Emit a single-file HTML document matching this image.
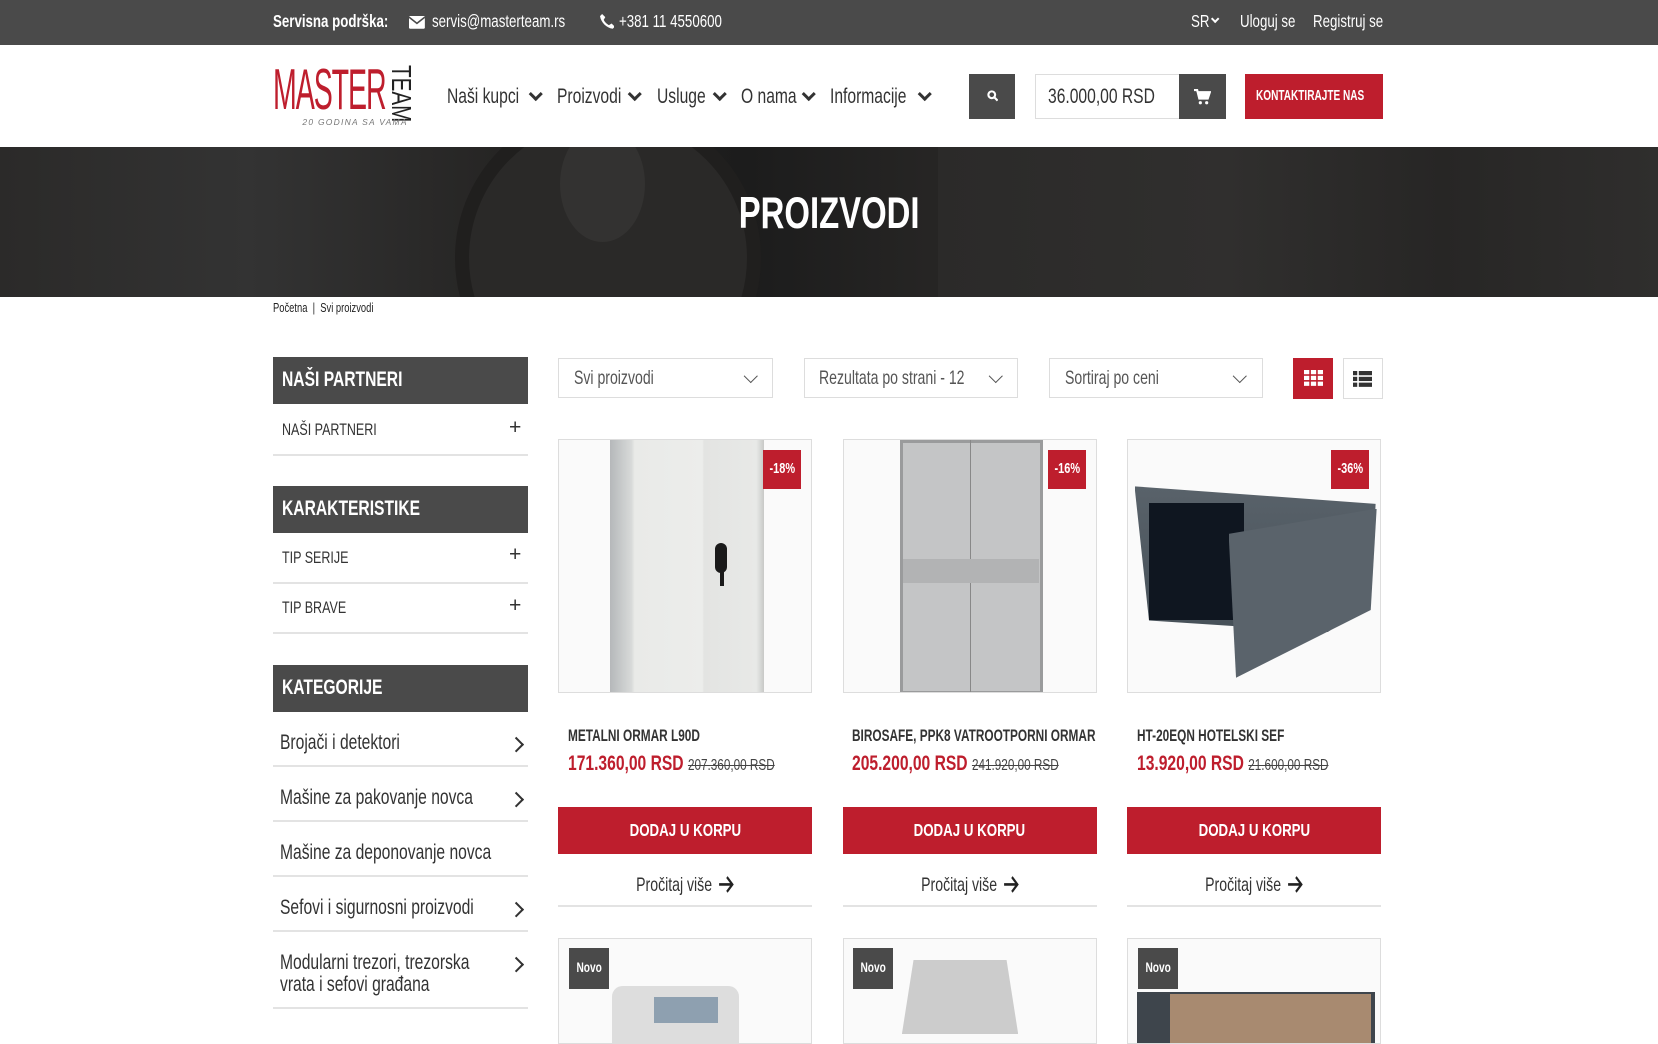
<!DOCTYPE html>
<html><head><meta charset="utf-8">
<style>
html{zoom:1.05740}
*{margin:0;padding:0;box-sizing:border-box}
body{width:1568px;height:973px;overflow:hidden;background:#fff;font-family:"Liberation Sans",sans-serif;color:#333;position:relative}
.a{position:absolute;white-space:nowrap}
.n{display:inline-block;transform:scaleX(.74);transform-origin:0 50%;white-space:nowrap}
.nc{display:inline-block;transform:scaleX(.74);transform-origin:50% 50%;white-space:nowrap}
.top{position:absolute;left:0;top:0;width:1568px;height:43px;background:#4a4a4a;color:#fff;font-size:17px;overflow:hidden}
.top .a{top:10px}
.nav{font-size:20px;top:80px;color:#333}
.chev{display:inline-block;width:9px;height:9px;border-right:3px solid #333;border-bottom:3px solid #333;transform:rotate(45deg);margin-left:8px;vertical-align:5px}
.hero{position:absolute;left:0;top:139px;width:1568px;height:142px;overflow:hidden;background:linear-gradient(90deg,#2b2a29 0%,#333 15%,#262524 30%,#1c1c1c 45%,#262524 56%,#2e2d2c 70%,#282726 85%,#333 100%)}
.sbh{position:absolute;left:258px;width:241px;height:44px;background:#4a4a4a;color:#fff;font-weight:bold;font-size:20px;padding:10px 9px}
.sbr{position:absolute;left:258px;width:241px;border-bottom:2px solid #e3e3e3;font-size:16px;padding-left:9px}
.plus{position:absolute;right:6px;top:0;font-size:20px}
.cat{position:absolute;left:258px;width:241px;border-bottom:2px solid #e3e3e3;font-size:20px;padding-left:7px;line-height:21px}
.rc{position:absolute;right:6px;width:10px;height:10px;border-right:2.5px solid #333;border-top:2.5px solid #333;transform:rotate(45deg)}
.sel{position:absolute;top:339px;height:37px;border:1px solid #ddd;font-size:18px;color:#555;padding:8px 14px;white-space:nowrap}
.sel i{position:absolute;right:16px;top:11px;width:9px;height:9px;border-right:1.5px solid #555;border-bottom:1.5px solid #555;transform:rotate(45deg)}
.img{position:absolute;top:415px;width:240px;height:240px;border:1px solid #ddd;background:#fafafa;overflow:hidden}
.badge{position:absolute;background:#be1e2d;color:#fff;font-weight:bold;font-size:14px;width:36px;height:37px;text-align:center;line-height:37px}
.t{position:absolute;top:687px;font-weight:bold;font-size:16px;color:#333}
.t .n{transform:scaleX(.7)}
.p{position:absolute;top:711px;font-size:20px;font-weight:bold;color:#be1e2d}
.p s{color:#444;font-weight:normal;font-size:15px}
.btn{position:absolute;top:763px;width:240px;height:45px;background:#be1e2d;color:#fff;font-weight:bold;font-size:17px;text-align:center;line-height:45px}
.more{position:absolute;top:818px;width:240px;height:40px;border-bottom:2px solid #e3e3e3;text-align:center;font-size:18px;line-height:40px}
.more svg{vertical-align:-2px;margin-left:8px}
.img2{position:absolute;top:887px;width:240px;height:100px;border:1px solid #ddd;background:#fafafa;overflow:hidden}
.novo{position:absolute;left:9px;top:9px;width:38px;height:38px;background:#4a4a4a;color:#fff;font-size:13px;font-weight:bold;text-align:center;line-height:38px}
</style></head><body>
<div class="top">
<span class="a" style="left:258px;font-weight:bold"><span class="n">Servisna podrška:</span></span>
<svg class="a" style="left:387px;top:15px" width="15" height="12" viewBox="0 0 15 12"><rect width="15" height="12" rx="1" fill="#fff"/><path d="M0 1l7.5 6L15 1" stroke="#4a4a4a" stroke-width="1.5" fill="none"/></svg>
<span class="a" style="left:409px"><span class="n">servis@masterteam.rs</span></span>
<svg class="a" style="left:567px;top:13px" width="14" height="14" viewBox="0 0 14 14"><path d="M2 0l3 3-1.5 2.5c1 2 3 4 5 5L11 9l3 3-2 2C6 13 1 8 0 2z" fill="#fff"/></svg>
<span class="a" style="left:585px"><span class="n">+381 11 4550600</span></span>
<span class="a" style="left:1126px"><span class="n">SR</span></span>
<span class="a" style="left:1146px;top:15px;width:6px;height:6px;border-right:2px solid #fff;border-bottom:2px solid #fff;transform:rotate(45deg)"></span>
<span class="a" style="left:1173px"><span class="n">Uloguj se</span></span>
<span class="a" style="left:1242px"><span class="n">Registruj se</span></span>
</div>
<div class="a" style="left:258px;top:58px;font-size:54px;color:#be1e2d;letter-spacing:-2px;line-height:56px;transform:scaleX(.5);transform-origin:left">MASTER</div>
<div class="a" style="top:61px;font-size:26px;color:#222;transform:rotate(90deg) scaleX(.75);transform-origin:0 0;left:393px;line-height:28px">TEAM</div>
<div class="a" style="left:286px;top:111px;font-size:8px;color:#777;letter-spacing:1.2px;font-style:italic">20 GODINA SA VAMA</div>
<span class="a nav" style="left:423px"><span class="n">Naši kupci</span></span><span class="a" style="left:494px;top:84px"><span class="chev"></span></span>
<span class="a nav" style="left:527px"><span class="n">Proizvodi</span></span><span class="a" style="left:588px;top:84px"><span class="chev"></span></span>
<span class="a nav" style="left:621px"><span class="n">Usluge</span></span><span class="a" style="left:668px;top:84px"><span class="chev"></span></span>
<span class="a nav" style="left:701px"><span class="n">O nama</span></span><span class="a" style="left:752px;top:84px"><span class="chev"></span></span>
<span class="a nav" style="left:785px"><span class="n">Informacije</span></span><span class="a" style="left:862px;top:84px"><span class="chev"></span></span>
<div class="a" style="left:916px;top:70px;width:44px;height:43px;background:#4a4a4a"><svg style="margin:15px 0 0 17px" width="11" height="11" viewBox="0 0 11 11"><circle cx="4.5" cy="4.5" r="3.2" stroke="#fff" stroke-width="2" fill="none"/><path d="M7 7l3 3" stroke="#fff" stroke-width="2"/></svg></div>
<div class="a" style="left:979px;top:70px;width:137px;height:43px;border:1px solid #ddd;font-size:20px;padding:9px 11px;color:#333"><span class="n">36.000,00 RSD</span></div>
<div class="a" style="left:1115px;top:70px;width:44px;height:43px;background:#4a4a4a"><svg style="margin:14px 0 0 14px" width="16" height="15" viewBox="0 0 16 15"><path d="M0 1h3l2 8h8l2-6H4" stroke="#fff" stroke-width="2" fill="#fff"/><circle cx="6" cy="13" r="1.5" fill="#fff"/><circle cx="12" cy="13" r="1.5" fill="#fff"/></svg></div>
<div class="a" style="left:1177px;top:70px;width:131px;height:43px;background:#be1e2d;color:#fff;font-weight:bold;font-size:14px;line-height:43px;padding-left:11px"><span class="n" style="transform:scaleX(.68)">KONTAKTIRAJTE NAS</span></div>
<div class="hero">
<div style="position:absolute;left:430px;top:-40px;width:290px;height:290px;border-radius:50%;background:#2a2928;border:14px solid #201f1e"></div>
<div style="position:absolute;left:530px;top:-20px;width:80px;height:110px;border-radius:50%;background:#333231"></div>
<div style="position:absolute;left:887px;top:0;width:681px;height:142px;background:linear-gradient(90deg,#2b2a29,#302f2e 40%,#272625 70%,#2f2e2d)"></div>
<div class="a" style="left:0;width:1568px;text-align:center;top:40px;color:#fff;font-weight:bold;font-size:42px"><span class="nc">PROIZVODI</span></div>
</div>
<div class="a" style="left:258px;top:285px;font-size:12px;color:#222"><span class="n">Početna &nbsp;|&nbsp; Svi proizvodi</span></div>

<div class="sbh" style="top:338px"><span class="n">NAŠI PARTNERI</span></div>
<div class="sbr" style="top:383px;height:48px;padding-top:14px"><span class="n">NAŠI PARTNERI</span><span class="plus" style="top:10px">+</span></div>
<div class="sbh" style="top:460px"><span class="n">KARAKTERISTIKE</span></div>
<div class="sbr" style="top:504px;height:48px;padding-top:14px"><span class="n">TIP SERIJE</span><span class="plus" style="top:10px">+</span></div>
<div class="sbr" style="top:552px;height:48px;padding-top:14px"><span class="n">TIP BRAVE</span><span class="plus" style="top:10px">+</span></div>
<div class="sbh" style="top:629px"><span class="n">KATEGORIJE</span></div>
<div class="cat" style="top:673px;height:52px;padding-top:19px"><span class="n">Brojači i detektori</span><i class="rc" style="top:26px"></i></div>
<div class="cat" style="top:725px;height:52px;padding-top:19px"><span class="n">Mašine za pakovanje novca</span><i class="rc" style="top:26px"></i></div>
<div class="cat" style="top:777px;height:52px;padding-top:19px"><span class="n">Mašine za deponovanje novca</span></div>
<div class="cat" style="top:829px;height:52px;padding-top:19px"><span class="n">Sefovi i sigurnosni proizvodi</span><i class="rc" style="top:26px"></i></div>
<div class="cat" style="top:881px;height:73px;padding-top:19px"><span class="n">Modularni trezori, trezorska<br>vrata i sefovi građana</span><i class="rc" style="top:26px"></i></div>

<div class="sel" style="left:528px;width:203px"><span class="n">Svi proizvodi</span><i></i></div>
<div class="sel" style="left:760px;width:203px"><span class="n">Rezultata po strani - 12</span><i></i></div>
<div class="sel" style="left:992px;width:202px"><span class="n">Sortiraj po ceni</span><i></i></div>
<div class="a" style="left:1223px;top:339px;width:38px;height:38px;background:#be1e2d"><svg style="margin:11px 0 0 10px" width="18" height="15" viewBox="0 0 18 15"><g fill="#fff"><rect width="5" height="4"/><rect x="6.5" width="5" height="4"/><rect x="13" width="5" height="4"/><rect y="5.5" width="5" height="4"/><rect x="6.5" y="5.5" width="5" height="4"/><rect x="13" y="5.5" width="5" height="4"/><rect y="11" width="5" height="4"/><rect x="6.5" y="11" width="5" height="4"/><rect x="13" y="11" width="5" height="4"/></g></svg></div>
<div class="a" style="left:1270px;top:339px;width:38px;height:38px;border:1px solid #ddd"><svg style="margin:11px 0 0 9px" width="18" height="15" viewBox="0 0 18 15"><g fill="#333"><rect width="4" height="4"/><rect x="5.5" width="12.5" height="4"/><rect y="5.5" width="4" height="4"/><rect x="5.5" y="5.5" width="12.5" height="4"/><rect y="11" width="4" height="4"/><rect x="5.5" y="11" width="12.5" height="4"/></g></svg></div>

<div class="img" style="left:528px"><div style="position:absolute;left:48px;top:0;width:146px;height:240px;background:linear-gradient(90deg,#b5b8ba 0,#d8dad9 14%,#e9eae8 16%,#ecedeb 60%,#e3e4e2 61%,#e8e9e7 95%,#c8c9c7 100%)"></div><div style="position:absolute;left:147px;top:98px;width:12px;height:28px;border-radius:6px;background:#1a1a1a"></div><div style="position:absolute;left:152px;top:120px;width:4px;height:18px;background:#1a1a1a"></div><div class="badge" style="left:193px;top:10px"><span class="nc">-18%</span></div></div>
<div class="img" style="left:797px"><div style="position:absolute;left:53px;top:0;width:135px;height:240px;background:#c4c5c6;border:3px solid #9a9b9c"></div><div style="position:absolute;left:119px;top:0;width:1px;height:240px;background:#888"></div><div style="position:absolute;left:56px;top:113px;width:129px;height:22px;background:#b2b3b4"></div><div class="badge" style="left:193px;top:10px"><span class="nc">-16%</span></div></div>
<div class="img" style="left:1066px"><div style="position:absolute;left:6px;top:44px;width:228px;height:138px;background:linear-gradient(180deg,#59626a,#465058);clip-path:polygon(0 0,100% 12%,98% 80%,80% 100%,6% 92%)"></div><div style="position:absolute;left:20px;top:60px;width:90px;height:110px;background:#0f1620"></div><div style="position:absolute;left:95px;top:65px;width:140px;height:160px;background:#5a636b;clip-path:polygon(0 15%,100% 0,96% 60%,5% 100%)"></div><div class="badge" style="left:192px;top:10px"><span class="nc">-36%</span></div></div>

<div class="t" style="left:537px"><span class="n">METALNI ORMAR L90D</span></div>
<div class="p" style="left:537px"><span class="n">171.360,00 RSD <s>207.360,00 RSD</s></span></div>
<div class="t" style="left:806px"><span class="n">BIROSAFE, PPK8 VATROOTPORNI ORMAR</span></div>
<div class="p" style="left:806px"><span class="n">205.200,00 RSD <s>241.920,00 RSD</s></span></div>
<div class="t" style="left:1075px"><span class="n">HT-20EQN HOTELSKI SEF</span></div>
<div class="p" style="left:1075px"><span class="n">13.920,00 RSD <s>21.600,00 RSD</s></span></div>

<div class="btn" style="left:528px"><span class="nc">DODAJ U KORPU</span></div>
<div class="btn" style="left:797px"><span class="nc">DODAJ U KORPU</span></div>
<div class="btn" style="left:1066px"><span class="nc">DODAJ U KORPU</span></div>
<div class="more" style="left:528px"><span class="nc">Pročitaj više<svg width="20" height="16" viewBox="0 0 20 16"><path d="M1 8h17M11 1l7 7-7 7" stroke="#222" stroke-width="2.5" fill="none"/></svg></span></div>
<div class="more" style="left:797px"><span class="nc">Pročitaj više<svg width="20" height="16" viewBox="0 0 20 16"><path d="M1 8h17M11 1l7 7-7 7" stroke="#222" stroke-width="2.5" fill="none"/></svg></span></div>
<div class="more" style="left:1066px"><span class="nc">Pročitaj više<svg width="20" height="16" viewBox="0 0 20 16"><path d="M1 8h17M11 1l7 7-7 7" stroke="#222" stroke-width="2.5" fill="none"/></svg></span></div>

<div class="img2" style="left:528px"><div style="position:absolute;left:50px;top:45px;width:120px;height:60px;background:#ddd;border-radius:10px 10px 0 0"></div><div style="position:absolute;left:90px;top:55px;width:60px;height:25px;background:#8ea0b0"></div><div class="novo"><span class="nc">Novo</span></div></div>
<div class="img2" style="left:797px"><div style="position:absolute;left:55px;top:20px;width:110px;height:70px;background:#ccc;clip-path:polygon(10% 0,90% 0,100% 100%,0 100%)"></div><div class="novo"><span class="nc">Novo</span></div></div>
<div class="img2" style="left:1066px"><div style="position:absolute;left:8px;top:50px;width:225px;height:60px;background:#3e454c"></div><div style="position:absolute;left:40px;top:52px;width:190px;height:60px;background:#a88a70"></div><div class="novo"><span class="nc">Novo</span></div></div>
</body></html>
